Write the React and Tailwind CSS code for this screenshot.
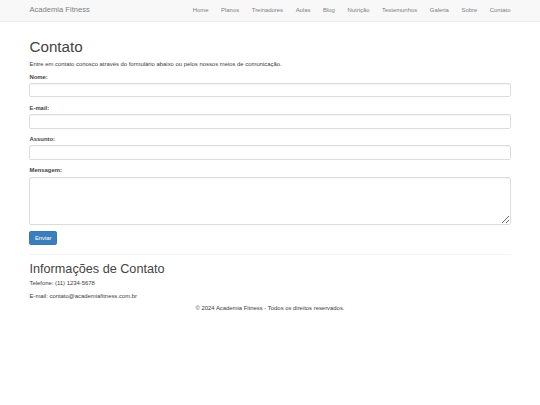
import React from "react";

const navItems = ["Home", "Planos", "Treinadores", "Aulas", "Blog", "Nutrição", "Testemunhos", "Galeria", "Sobre", "Contato"];

function Field({ label, children }) {
  return (
    <div className="mb-[6.3px]">
      <label className="block font-bold mb-[2.1px] leading-[8.44px] text-[#444]">{label}</label>
      {children}
    </div>
  );
}

const inputCls =
  "block w-full h-[14.34px] bg-white border border-[#dcdcdc] rounded-[1.7px] shadow-[inset_0_0.4px_0.4px_rgba(0,0,0,0.075)] outline-none";

export default function App() {
  return (
    <div
      className="min-h-[405px] bg-white text-[#3c3c3c] text-[5.9px] leading-[8.44px]"
      style={{ fontFamily: '"Liberation Sans", Arial, Helvetica, sans-serif' }}
    >
      <nav className="h-[21.5px] bg-[#f8f8f8] border-b border-[#ececec]">
        <div className="mx-[23.2px] px-[6.3px] flex items-center justify-between h-full">
          <a className="text-[7.6px] leading-[8.44px] text-[#808080]">Academia Fitness</a>
          <ul className="flex mr-[-6.3px]">
            {navItems.map((n) => (
              <li key={n} className="px-[6.33px] text-[#808080] text-[5.9px] leading-[8.44px]">
                {n}
              </li>
            ))}
          </ul>
        </div>
      </nav>

      <div className="mx-[23.2px] px-[6.3px] pt-[17.6px]">
        <h1 className="text-[15.2px] leading-[1.1] mb-[4.2px] font-normal text-[#444]">Contato</h1>
        <p className="mb-[4.2px]">Entre em contato conosco através do formulário abaixo ou pelos nossos meios de comunicação.</p>
        <form>
          <Field label="Nome:">
            <input type="text" className={inputCls} />
          </Field>
          <Field label="E-mail:">
            <input type="email" className={inputCls} />
          </Field>
          <Field label="Assunto:">
            <input type="text" className={inputCls} />
          </Field>
          <Field label="Mensagem:">
            <textarea
              rows={5}
              className="block w-full h-[48px] bg-white border border-[#dcdcdc] rounded-[1.7px] shadow-[inset_0_0.4px_0.4px_rgba(0,0,0,0.075)] outline-none"
            />
          </Field>
          <button
            type="button"
            className="h-[14.3px] w-[27.5px] bg-[#3a7fbb] border border-[#3a78ae] rounded-[1.7px] text-white text-[5.9px] leading-[8.44px]"
          >
            Enviar
          </button>
        </form>
        <hr className="mt-[8.4px] mb-[8.4px] border-0 border-t border-[#f2f2f2]" />
        <h2 className="text-[12.66px] leading-[1.1] font-normal mb-[2.2px] text-[#444]">Informações de Contato</h2>
        <p className="mb-[4px]">Telefone: (11) 1234-5678</p>
        <p className="mb-[4.2px]">E-mail: contato@academiafitness.com.br</p>
        <p className="text-center">© 2024 Academia Fitness - Todos os direitos reservados.</p>
      </div>
    </div>
  );
}
